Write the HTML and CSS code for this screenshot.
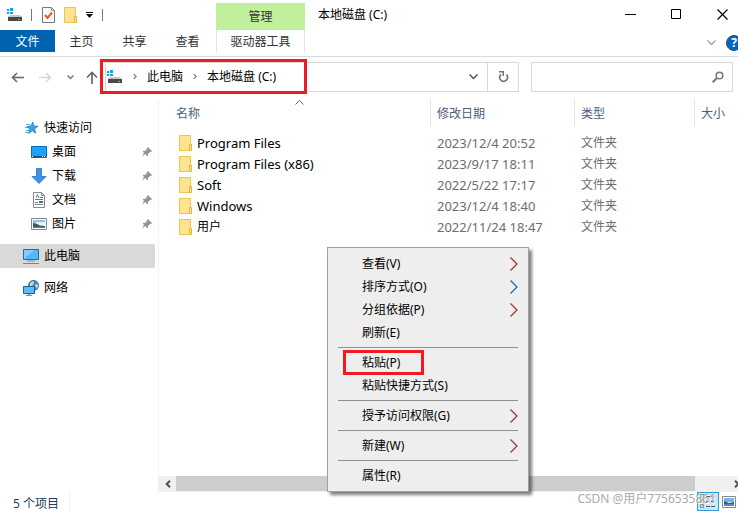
FILE: index.html
```html
<!DOCTYPE html>
<html lang="zh-CN">
<head>
  <meta charset="UTF-8" />
  <meta name="viewport" content="width=device-width, initial-scale=1.0"/>
  <title>本地磁盘 (C:)</title>
  <link rel="stylesheet" href="styles.css">
</head>
<body>
  <!-- shared icons -->
  <svg class="defs" width="0" height="0">
    <symbol id="drive" viewBox="0 0 16 16">
      <path fill="#00adef" d="M0 2h2v2H0zM3 1h3v3H3zM0 5h2v2H0zM3 5h3v2H3z"/>
      <path fill="#c4c6c8" d="M3 8h10l2 2H1z"/>
      <path fill="#45494c" d="M1 10h14v4H1z"/>
      <path fill="#2fe04b" d="M11 12h2v1h-2z"/>
    </symbol>
    <symbol id="folder" viewBox="0 0 13 16">
      <path fill="#ffe48f" stroke="#eac54f" d="M.5.5h11v15H.5z"/>
      <path fill="#ffe48f" stroke="#e3b83a" d="M10.500 9.500h2v6h-2z"/>
    </symbol>
    <symbol id="pin" viewBox="0 0 10 10">
      <path fill="#8a97a3" d="M6 0l4 4-1 1H8L6 7v2L5 9 3 7 0 10 2 6 1 5V4h2l2-2V1z"/>
    </symbol>
    <symbol id="right" viewBox="0 0 8 14">
      <path fill="none" stroke="currentColor" stroke-width="1.200" d="M.5.5L7 7 .5 13.500"/>
    </symbol>
    <symbol id="crumb" viewBox="0 0 5 7">
      <path fill="none" stroke="#666" stroke-width="1.300" d="M1 .5l3 3-3 3"/>
    </symbol>
  </svg>

  <div class="window">
    <header class="titlebar">
      <div class="quick-tools">
        <svg class="drive-icon"><use href="#drive"/></svg>
        <span class="divider"></span>
        <button type="button" aria-label="属性">
          <svg width="13" height="16" viewBox="0 0 13 16"><path fill="#fafafa" stroke="#777" d="M.5.5h9l3 3v12H.5z"/><path fill="none" stroke="#999" d="M9.500.5v3h3"/><path fill="none" stroke="#f0552b" stroke-width="2" d="M3 8l2.500 3L10 5.500"/></svg>
        </button>
        <button type="button" aria-label="新建文件夹"><svg class="folder-icon"><use href="#folder"/></svg></button>
        <button type="button" aria-label="自定义快速访问工具栏">
          <svg width="7" height="6" viewBox="0 0 7 6"><path fill="#111" d="M0 0h7v1H0zM0 2h7L3.500 6z"/></svg>
        </button>
        <span class="divider"></span>
      </div>
      <div class="context-title">管理</div>
      <h1>本地磁盘 (C:)</h1>
      <div class="window-buttons">
        <button type="button" aria-label="最小化"><svg width="11" height="11"><path stroke="#000" d="M0 5.500h11"/></svg></button>
        <button type="button" aria-label="最大化"><svg width="11" height="11"><path fill="none" stroke="#000" d="M.5.5h9v9h-9z"/></svg></button>
        <button type="button" aria-label="关闭"><svg width="11" height="11"><path stroke="#000" stroke-width="1.200" d="M.5.5l10 10M10.500.5l-10 10"/></svg></button>
      </div>
    </header>

    <nav class="ribbon">
      <button type="button" class="tab file">文件</button>
      <button type="button" class="tab">主页</button>
      <button type="button" class="tab">共享</button>
      <button type="button" class="tab">查看</button>
      <button type="button" class="tab drive-tools">驱动器工具</button>
      <div class="ribbon-end">
        <button type="button" aria-label="展开功能区"><svg width="9" height="5"><path fill="none" stroke="#999" stroke-width="1.200" d="M.5.5l4 4 4-4"/></svg></button>
        <button type="button" class="help">?</button>
      </div>
    </nav>

    <div class="navbar">
      <div class="history">
        <button type="button" aria-label="后退"><svg width="13" height="11"><path fill="none" stroke="#666" stroke-width="1.500" d="M13 5.500H1.500M6 1L1.500 5.500 6 10"/></svg></button>
        <button type="button" aria-label="前进"><svg width="13" height="11"><path fill="none" stroke="#d5d5d5" stroke-width="1.500" d="M0 5.500h11.500M7 1l4.500 4.500L7 10"/></svg></button>
        <button type="button" aria-label="最近的位置"><svg width="7" height="5"><path fill="none" stroke="#777" stroke-width="1.500" d="M.5.5l3 3 3-3"/></svg></button>
        <button type="button" aria-label="向上"><svg width="12" height="13"><path fill="none" stroke="#666" stroke-width="1.700" d="M6 13V1.500M1 6.500l5-5 5 5"/></svg></button>
      </div>
      <div class="address">
        <div class="crumbs">
          <svg class="drive-icon"><use href="#drive"/></svg>
          <svg class="crumb-arrow"><use href="#crumb"/></svg>
          <a href="#">此电脑</a>
          <svg class="crumb-arrow"><use href="#crumb"/></svg>
          <a href="#">本地磁盘 (C:)</a>
        </div>
        <button type="button" class="drop" aria-label="以前的位置"><svg width="9" height="6"><path fill="none" stroke="#555" stroke-width="1.500" d="M.5.5l4 4 4-4"/></svg></button>
        <button type="button" class="refresh" aria-label="刷新"><svg width="11" height="12"><path fill="none" stroke="#777" stroke-width="1.700" d="M3 3.300A4 4 0 1 0 8.500 3.500"/><path fill="#777" d="M1 0h5v5H4.500V1.500H1z"/></svg></button>
      </div>
      <div class="search">
        <input type="text" aria-label="搜索">
        <svg width="12" height="12"><circle cx="7.500" cy="4.500" r="3.300" fill="none" stroke="#777" stroke-width="1.500"/><path stroke="#777" stroke-width="2" d="M5 7L.7 11.300"/></svg>
      </div>
    </div>

    <main class="content">
      <aside class="sidebar">
        <a href="#" class="root">
          <svg class="icon"><path fill="#5aaee8" d="M3 4h4v1H3zM2 7h4v1H2zM3 10h3v1H3zM2 12h3v1H2z"/><path fill="#39a3ea" stroke="#1875bd" stroke-width=".7" d="M9.800 2l1 4 4.200.2-3.400 2.600 1 4.400-3.400-2.400L5.500 13.500l1.200-4.300L4 6.500l4-.5z"/></svg>
          快速访问
        </a>
        <a href="#" class="child">
          <svg class="icon"><path fill="#1ba2fb" stroke="#0c6cb3" d="M.5 2.500h15v11H.5z"/><path fill="#0d4e85" d="M1 12h14v1H1z"/><path fill="#fff" d="M1 12h1v1H1zM11 12h1v1h-1zM13 12h1v1h-1z"/></svg>
          桌面
          <svg class="pin"><use href="#pin"/></svg>
        </a>
        <a href="#" class="child">
          <svg class="icon"><path fill="#3e95e6" stroke="#2474c0" stroke-width=".8" d="M5.500.5h5v8H15L8 15.500 1 8.500h4.500z"/></svg>
          下载
          <svg class="pin"><use href="#pin"/></svg>
        </a>
        <a href="#" class="child">
          <svg class="icon"><path fill="#fff" stroke="#888" d="M2.500.5h8l3 3v12h-11z"/><path fill="none" stroke="#888" d="M10.500.5v3h3M4 10.500h3M4 12.500h8"/><path fill="none" stroke="#2d8dcd" d="M5 6l1.500-3.500L8 6M9 5.500h3M4 7.500h8"/><path fill="#46718b" d="M8 9h4v2H8z"/></svg>
          文档
          <svg class="pin"><use href="#pin"/></svg>
        </a>
        <a href="#" class="child">
          <svg class="icon"><path fill="#fff" stroke="#888" d="M.5 2.500h15v11H.5z"/><path fill="#8fc3f0" d="M2 4h12v5H2z"/><path fill="#e4f1fb" d="M5 6h9v3H5z"/><path fill="#345d5e" d="M2 7l4 1 3 1.500 5 .5v2H2z"/><path fill="#4b85b5" d="M2 11h12v1H2z"/></svg>
          图片
          <svg class="pin"><use href="#pin"/></svg>
        </a>
        <a href="#" class="root selected">
          <svg class="icon"><path fill="#4dbafa" stroke="#35688f" d="M.5 1.500h15v10H.5z"/><path fill="#7fcffd" d="M1 11L11 2H1z"/><path fill="#8295a3" d="M4 12.500h8v1H4z"/><path fill="#6689a1" d="M0 15h16v1H0z"/></svg>
          此电脑
        </a>
        <a href="#" class="root">
          <svg class="icon"><circle cx="10.500" cy="5.500" r="5" fill="#4b8fae" stroke="#356b88"/><path fill="#b5dced" d="M7 3l3-2 1 2-2 3-2 1zM12 5l3-1v3l-2 1z"/><path fill="#58bdf8" stroke="#245f8d" d="M.5 6.500h11v7H.5z"/><path fill="#7894a7" d="M5 14h2v1h2v1H3v-1h2z"/></svg>
          网络
        </a>
      </aside>

      <section class="files">
        <table>
          <thead>
            <tr>
              <th class="name">名称<svg class="sort" width="9" height="5"><path fill="none" stroke="#666" d="M.5 4.500l4-4 4 4"/></svg></th>
              <th class="date">修改日期</th>
              <th class="type">类型</th>
              <th class="size">大小</th>
            </tr>
          </thead>
          <tbody>
            <tr><td><span class="entry"><svg class="folder-icon"><use href="#folder"/></svg>Program Files</span></td><td>2023/12/4 20:52</td><td class="kind">文件夹</td><td></td></tr>
            <tr><td><span class="entry"><svg class="folder-icon"><use href="#folder"/></svg>Program Files (x86)</span></td><td>2023/9/17 18:11</td><td class="kind">文件夹</td><td></td></tr>
            <tr><td><span class="entry"><svg class="folder-icon"><use href="#folder"/></svg>Soft</span></td><td>2022/5/22 17:17</td><td class="kind">文件夹</td><td></td></tr>
            <tr><td><span class="entry"><svg class="folder-icon"><use href="#folder"/></svg>Windows</span></td><td>2023/12/4 18:40</td><td class="kind">文件夹</td><td></td></tr>
            <tr><td><span class="entry kind"><svg class="folder-icon"><use href="#folder"/></svg>用户</span></td><td>2022/11/24 18:47</td><td class="kind">文件夹</td><td></td></tr>
          </tbody>
        </table>
        <div class="scrollbar">
          <button type="button" aria-label="向左滚动"><svg width="6" height="8"><path fill="none" stroke="#505050" stroke-width="2" d="M5 .7L1.700 4 5 7.300"/></svg></button>
          <div class="track"><div class="thumb"></div></div>
          <button type="button" aria-label="向右滚动"><svg width="6" height="8"><path fill="none" stroke="#505050" stroke-width="2" d="M1 .7L4.300 4 1 7.300"/></svg></button>
        </div>
      </section>
    </main>

    <footer class="statusbar">
      <span class="count">5 个项目</span>
      <div class="views">
        <button type="button" class="active" aria-label="详细信息"><svg width="16" height="16"><path fill="#fff" stroke="#888" d="M.5.5h3v3h-3zM.5 5.500h3v3h-3zM.5 10.500h3v3h-3z"/><path fill="#c33" d="M1.500 6.500h1v1h-1zM1.500 11.500h1v1h-1z"/><path stroke="#555" stroke-dasharray="4 1" d="M6 2.500h10M6 7.500h10M6 12.500h10"/></svg></button>
        <button type="button" aria-label="大缩略图"><svg width="14" height="12"><path fill="#fff" stroke="#888" d="M.5.5h13v11H.5z"/><path fill="#75b5ed" d="M2 2h10v4H2z"/><path fill="#32606b" d="M2 5l5 2 5-1v3H2z"/><path fill="#4d8ed0" d="M2 8h10v2H2z"/></svg></button>
      </div>
    </footer>
  </div>

  <div class="menu" role="menu">
    <button type="button" role="menuitem">查看(V)<svg class="red"><use href="#right"/></svg></button>
    <button type="button" role="menuitem">排序方式(O)<svg class="blue"><use href="#right"/></svg></button>
    <button type="button" role="menuitem">分组依据(P)<svg class="red"><use href="#right"/></svg></button>
    <button type="button" role="menuitem">刷新(E)</button>
    <hr>
    <button type="button" role="menuitem" class="paste">粘贴(P)</button>
    <button type="button" role="menuitem">粘贴快捷方式(S)</button>
    <hr>
    <button type="button" role="menuitem">授予访问权限(G)<svg class="red"><use href="#right"/></svg></button>
    <hr>
    <button type="button" role="menuitem">新建(W)<svg class="red"><use href="#right"/></svg></button>
    <hr>
    <button type="button" role="menuitem">属性(R)</button>
  </div>

  <div class="watermark">CSDN @用户7756535861</div>
</body>
</html>
```
FILE: styles.css
```css
* {
  margin: 0;
  padding: 0;
  box-sizing: border-box;
}

body {
  font-family: "Noto Sans", "Noto Sans CJK SC", sans-serif;
  font-size: 12px;
  line-height: 16px;
  color: #000;
  background: #fff;
  overflow: hidden;
}

button {
  display: flex;
  align-items: center;
  justify-content: center;
  font: inherit;
  color: inherit;
  background: none;
  border: none;
}

a {
  color: inherit;
  text-decoration: none;
}

svg {
  display: block;
  flex-shrink: 0;
}

.defs {
  position: absolute;
}

.drive-icon,
.icon {
  width: 16px;
  height: 16px;
}

.folder-icon {
  width: 13px;
  height: 16px;
}

.window {
  display: flex;
  flex-direction: column;
  height: 100vh;
}

/* title bar */
.titlebar {
  display: flex;
  height: 30px;
}

.quick-tools {
  display: flex;
  align-items: center;
  gap: 8px;
  width: 216px;
  padding-left: 7px;
}

.quick-tools button {
  margin-right: 1px;
}

.divider {
  width: 1px;
  height: 12px;
  margin-right: 2px;
  background: #777;
}

.context-title {
  width: 89px;
  margin-top: 3px;
  padding-top: 6px;
  text-align: center;
  color: #333;
  background: #c1f09c;
}

h1 {
  flex: 1;
  padding: 7px 0 0 13px;
  font-size: 12px;
  font-weight: normal;
}

.window-buttons {
  display: flex;
  margin-right: -7px;
}

.window-buttons button {
  width: 46px;
  padding-bottom: 2px;
}

/* ribbon tabs */
.ribbon {
  display: flex;
  height: 27px;
  padding-bottom: 4px;
  border-bottom: 1px solid #dadbdc;
}

.tab {
  width: 53px;
  padding-top: 2px;
  color: #333;
}

.file {
  width: 55px;
  color: #fff;
  background: #0063b1;
}

.drive-tools {
  width: 89px;
  margin-left: 2px;
  border: 1px solid #e3e3e3;
  border-width: 0 1px;
}

.ribbon-end {
  display: flex;
  flex: 1;
  align-items: center;
  justify-content: flex-end;
  gap: 10px;
  padding-top: 3px;
  margin-right: -4px;
}

.help {
  width: 16px;
  height: 16px;
  font-weight: bold;
  color: #fff;
  background: #0067c0;
  border: 1px solid #174f85;
  border-radius: 50%;
}

/* address row */
.navbar {
  display: flex;
  padding: 5px 5px 7px 0;
}

.history {
  display: flex;
  align-items: center;
  gap: 15px;
  width: 100px;
  padding-left: 11px;
}

.history button:last-child {
  margin-left: -3px;
}

.address {
  display: flex;
  flex: 1;
  margin: 0 12px 0 5px;
  border: 1px solid #d9d9d9;
}

.crumbs {
  display: flex;
  align-items: center;
  gap: 10px;
  width: 207px;
  height: 35px;
  margin: -4px auto -3px -6px;
  padding-left: 4px;
  border: 3px solid #ed1c24;
}

.crumb-arrow {
  width: 4px;
  height: 7px;
}

.drop {
  width: 28px;
}

.refresh {
  width: 31px;
  border-left: 1px solid #d9d9d9;
}

.search {
  display: flex;
  align-items: center;
  width: 202px;
  padding-right: 8px;
  border: 1px solid #d9d9d9;
}

.search input {
  flex: 1;
  min-width: 0;
  height: 28px;
  padding: 0 8px;
  font: inherit;
  border: none;
  outline: none;
}

/* body */
.content {
  display: flex;
  flex: 1;
  min-height: 0;
}

.sidebar {
  width: 159px;
  padding: 17px 3px 0 0;
  border-right: 1px solid #f0f0f0;
}

.sidebar a {
  display: flex;
  align-items: center;
  gap: 5px;
  height: 24px;
}

.sidebar .root {
  padding-left: 23px;
}

.sidebar .child {
  padding-left: 31px;
}

.sidebar .selected {
  margin: 8px 0;
  background: #d9d9d9;
}

.pin {
  width: 10px;
  height: 10px;
  margin: 0 3px 0 auto;
}

.files {
  display: flex;
  flex: 1;
  flex-direction: column;
  justify-content: space-between;
  min-width: 0;
}

table {
  width: 100%;
  table-layout: fixed;
  border-spacing: 0;
  text-align: left;
}

th {
  position: relative;
  height: 27px;
  padding: 2px 0 0 6px;
  font-weight: normal;
  color: #4c607a;
  border-left: 1px solid #e5e5e5;
}

.name {
  padding-left: 17px;
  border-left: none;
}

.date {
  width: 144px;
}

.type {
  width: 120px;
}

.size {
  width: 44px;
}

.sort {
  position: absolute;
  top: 1px;
  left: 50%;
}

td {
  height: 21px;
  padding-left: 7px;
  font-size: 13px;
  color: #6d6d6d;
}

td:first-child {
  padding-left: 20px;
  color: #000;
}

.kind {
  font-size: 12px;
}

tbody::before {
  content: "";
  display: block;
  height: 6px;
}

.entry {
  display: flex;
  align-items: center;
  gap: 5px;
}

.scrollbar {
  display: flex;
  height: 16px;
  margin-right: -7px;
  background: #f0f0f0;
}

.scrollbar button {
  width: 17px;
}

.track {
  flex: 1;
}

.thumb {
  width: 94%;
  height: 15px;
  background: #cdcdcd;
}

.statusbar {
  display: flex;
  justify-content: space-between;
  height: 19px;
  padding-left: 13px;
  color: #1e395b;
}

.count {
  padding: 4px 10px 0 0;
  border-right: 1px solid #f0f0f0;
}

.views {
  display: flex;
  margin-right: -1px;
}

.views button {
  width: 20px;
}

.views .active {
  width: 22px;
  background: #cbe8f6;
  border: 1px solid #26a0da;
}

/* right-click menu */
.menu {
  position: absolute;
  top: 247px;
  left: 327px;
  width: 202px;
  padding: 4px 10px;
  background: #eee;
  border: 1px solid #a0a0a0;
  box-shadow: 3px 3px 3px rgba(0, 0, 0, 0.5);
}

.menu button {
  justify-content: space-between;
  width: 100%;
  height: 23px;
  padding-left: 24px;
}

.menu hr {
  margin: 3px 0;
  border: none;
  border-top: 1px solid #919191;
}

.menu svg {
  width: 8px;
  height: 14px;
}

.red {
  color: #a52a2a;
}

.blue {
  color: #1464b4;
}

.menu .paste {
  width: 81px;
  height: 25px;
  margin: -1px 0 -1px 5px;
  padding-left: 16px;
  border: 3px solid #ed1c24;
}

.watermark {
  position: absolute;
  right: 22px;
  bottom: 4px;
  color: #aaa;
  text-shadow: 1px 1px 0 #fff;
}
```
